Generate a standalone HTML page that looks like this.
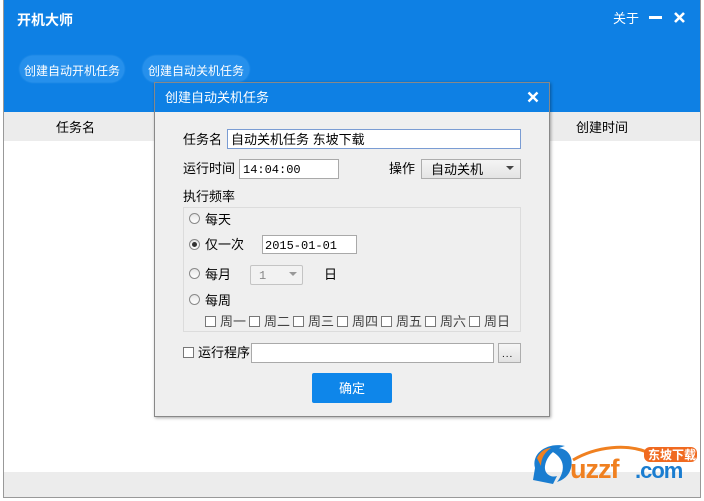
<!DOCTYPE html>
<html><head><meta charset="utf-8"><style>
*{margin:0;padding:0;box-sizing:border-box}
body{width:704px;height:501px;background:#fff;position:relative;overflow:hidden;font-family:"Liberation Sans","Noto Sans CJK SC","WenQuanYi Zen Hei",sans-serif;font-size:13px;color:#000}
.a{position:absolute}
.t{position:absolute;line-height:16px;white-space:nowrap;margin-top:1px}
.inp{position:absolute;background:#fff;border:1px solid #a9a9a9}
.rad{position:absolute;width:11px;height:11px;border:1px solid #8a8a8a;border-radius:50%;background:linear-gradient(#e6e6e6,#fff)}
.cb{position:absolute;width:11px;height:11px;border:1px solid #777;background:#fff}
.mono{font-family:"Liberation Mono",monospace;font-size:12px}
</style></head><body>
<div class="a" style="left:3px;top:0;width:698px;height:498px;border:1px solid #999;border-top:none;background:#fff"></div>
<div class="a" style="left:4px;top:0;width:696px;height:112px;background:#0e80e4"></div>
<div class="t" style="left:17px;top:11px;color:#fff;font-weight:bold;font-size:14px">开机大师</div>
<div class="t" style="left:613px;top:10px;color:#fff">关于</div>
<div class="a" style="left:649px;top:16px;width:13px;height:3px;background:#fff"></div>
<svg class="a" style="left:673px;top:11px" width="13" height="13"><path d="M2 2L11 11M11 2L2 11" stroke="#fff" stroke-width="2.6"/></svg>
<div class="a" style="left:20px;top:56px;width:104px;height:26px;border-radius:13px;background:#2690ec;box-shadow:0 0 2px #4aa3f0"></div>
<div class="t" style="left:24px;top:62px;color:#fff;font-size:12px">创建自动开机任务</div>
<div class="a" style="left:143px;top:56px;width:106px;height:26px;border-radius:13px;background:#2690ec;box-shadow:0 0 2px #4aa3f0"></div>
<div class="t" style="left:148px;top:62px;color:#fff;font-size:12px">创建自动关机任务</div>
<div class="a" style="left:4px;top:112px;width:696px;height:29px;background:#ececec"></div>
<div class="t" style="left:56px;top:119px">任务名</div>
<div class="t" style="left:576px;top:119px">创建时间</div>
<div class="a" style="left:4px;top:472px;width:696px;height:25px;background:#ececec"></div>

<!-- logo -->
<svg class="a" style="left:527px;top:438px" width="175" height="50">
<path d="M8 30C4 14 22 4 38 8C30 10 20 16 18 28C17 36 24 40 30 38L26 46L6 42Z" fill="#1a7dd0"/>
<path d="M22 12C34 6 48 14 44 30C42 38 36 42 30 44C38 34 40 20 22 12Z" fill="#1a7dd0"/>
<path d="M10 20C14 12 20 10 24 10C18 14 14 20 14 28Z" fill="#f08020"/>
<path d="M46 22C70 8 100 6 120 14" stroke="#f08020" stroke-width="3" fill="none"/>
<text x="43" y="40" font-family="Liberation Sans" font-weight="bold" font-size="27" fill="#f08020" letter-spacing="-1">uzzf</text>
<text x="108" y="40" font-family="Liberation Sans" font-weight="bold" font-size="22" fill="#1a7dd0" letter-spacing="-1">.com</text>
<rect x="117" y="9" width="53" height="15" rx="6" fill="#f06a20"/>
<text x="121" y="21" font-family="Noto Sans CJK SC" font-weight="bold" font-size="12" fill="#fff">东坡下载</text>
</svg>

<!-- dialog -->
<div class="a" style="left:154px;top:82px;width:396px;height:335px;background:#efefef;border:1px solid #888;box-shadow:1px 1px 3px rgba(0,0,0,.35)"></div>
<div class="a" style="left:155px;top:83px;width:394px;height:29px;background:#0e80e4"></div>
<div class="t" style="left:165px;top:89px;color:#fff">创建自动关机任务</div>
<svg class="a" style="left:527px;top:91px" width="12" height="12"><path d="M1.5 1.5L10.5 10.5M10.5 1.5L1.5 10.5" stroke="#fff" stroke-width="2.4"/></svg>

<div class="t" style="left:183px;top:131px">任务名</div>
<div class="inp" style="left:227px;top:129px;width:294px;height:20px;border-color:#7a9cd3"></div>
<div class="t" style="left:231px;top:131px">自动关机任务 东坡下载</div>

<div class="t" style="left:183px;top:160px">运行时间</div>
<div class="inp" style="left:239px;top:159px;width:100px;height:20px"></div>
<div class="t mono" style="left:243px;top:161px">14:04:00</div>
<div class="t" style="left:389px;top:160px">操作</div>
<div class="a" style="left:421px;top:159px;width:100px;height:20px;border:1px solid #adadad;background:linear-gradient(#f4f4f4,#e4e4e4)"></div>
<div class="t" style="left:431px;top:161px">自动关机</div>
<svg class="a" style="left:506px;top:166px" width="9" height="6"><path d="M0 0H8L4 4Z" fill="#444"/></svg>

<div class="t" style="left:183px;top:188px">执行频率</div>
<div class="a" style="left:183px;top:207px;width:338px;height:125px;border:1px solid #dcdcdc"></div>

<div class="rad" style="left:189px;top:213px"></div>
<div class="t" style="left:205px;top:211px">每天</div>
<div class="rad" style="left:189px;top:239px"></div>
<div class="a" style="left:192px;top:242px;width:5px;height:5px;border-radius:50%;background:#333"></div>
<div class="t" style="left:205px;top:236px">仅一次</div>
<div class="inp" style="left:262px;top:235px;width:95px;height:19px"></div>
<div class="t mono" style="left:265px;top:237px">2015-01-01</div>
<div class="rad" style="left:189px;top:268px"></div>
<div class="t" style="left:205px;top:266px">每月</div>
<div class="a" style="left:250px;top:265px;width:53px;height:20px;border:1px solid #c4c4c4;background:#f2f2f2;border-radius:2px"></div>
<div class="t mono" style="left:259px;top:267px;color:#888">1</div>
<svg class="a" style="left:289px;top:272px" width="9" height="6"><path d="M0 0H8L4 4Z" fill="#999"/></svg>
<div class="t" style="left:324px;top:266px">日</div>
<div class="rad" style="left:189px;top:294px"></div>
<div class="t" style="left:205px;top:292px">每周</div>

<div class="cb" style="left:205px;top:316px"></div><div class="t" style="left:220px;top:313px;color:#444">周一</div>
<div class="cb" style="left:249px;top:316px"></div><div class="t" style="left:264px;top:313px;color:#444">周二</div>
<div class="cb" style="left:293px;top:316px"></div><div class="t" style="left:308px;top:313px;color:#444">周三</div>
<div class="cb" style="left:337px;top:316px"></div><div class="t" style="left:352px;top:313px;color:#444">周四</div>
<div class="cb" style="left:381px;top:316px"></div><div class="t" style="left:396px;top:313px;color:#444">周五</div>
<div class="cb" style="left:425px;top:316px"></div><div class="t" style="left:440px;top:313px;color:#444">周六</div>
<div class="cb" style="left:469px;top:316px"></div><div class="t" style="left:484px;top:313px;color:#444">周日</div>

<div class="cb" style="left:183px;top:347px"></div>
<div class="t" style="left:198px;top:344px">运行程序</div>
<div class="inp" style="left:251px;top:343px;width:243px;height:20px"></div>
<div class="a" style="left:498px;top:343px;width:23px;height:20px;border:1px solid #adadad;background:linear-gradient(#f6f6f6,#e2e2e2)"></div>
<div class="t" style="left:502px;top:346px;font-size:10px;letter-spacing:1px">...</div>

<div class="a" style="left:312px;top:373px;width:80px;height:30px;background:#0e86ea;border-radius:2px"></div>
<div class="t" style="left:339px;top:380px;color:#fff">确定</div>
</body></html>
